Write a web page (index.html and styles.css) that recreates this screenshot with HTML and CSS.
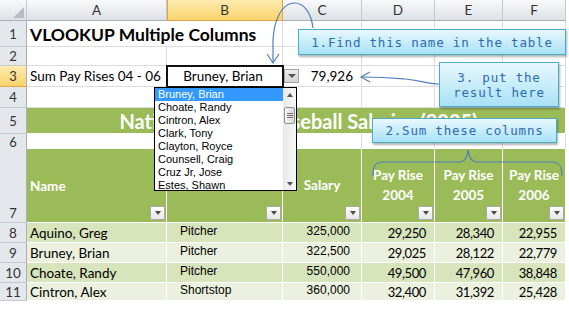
FILE: index.html
```html
<!DOCTYPE html>
<html lang="en">
    <head>
        <meta charset="UTF-8">
        <title>VLOOKUP Multiple Columns</title>
        <link rel="stylesheet" href="styles.css">
    </head>
    <body>
        <div class="page">
            <div class="sheet">
                <div class="row row-head">
                    <div class="cell corner"><span class="corner-mark"></span></div>
                    <div class="cell">A</div>
                    <div class="cell is-sel">B</div>
                    <div class="cell">C</div>
                    <div class="cell">D</div>
                    <div class="cell">E</div>
                    <div class="cell">F</div>
                    <div class="cell rest"></div>
                </div>

                <div class="row r1">
                    <div class="cell num">1</div>
                    <div class="cell title span2">VLOOKUP Multiple Columns</div>
                    <div class="cell"></div>
                    <div class="cell"></div>
                    <div class="cell"></div>
                    <div class="cell"></div>
                    <div class="cell rest"></div>
                </div>

                <div class="row r2">
                    <div class="cell num">2</div>
                    <div class="cell"></div>
                    <div class="cell"></div>
                    <div class="cell"></div>
                    <div class="cell"></div>
                    <div class="cell"></div>
                    <div class="cell"></div>
                    <div class="cell rest"></div>
                </div>

                <div class="row r3">
                    <div class="cell num is-sel">3</div>
                    <div class="cell">Sum Pay Rises 04 - 06</div>
                    <div class="cell active">Bruney, Brian<span class="drop-btn"></span></div>
                    <div class="cell right total">79,926</div>
                    <div class="cell"></div>
                    <div class="cell"></div>
                    <div class="cell"></div>
                    <div class="cell rest"></div>
                </div>

                <div class="row r4">
                    <div class="cell num">4</div>
                    <div class="cell"></div>
                    <div class="cell"></div>
                    <div class="cell"></div>
                    <div class="cell"></div>
                    <div class="cell"></div>
                    <div class="cell"></div>
                    <div class="cell rest"></div>
                </div>

                <div class="row r5">
                    <div class="cell num">5</div>
                    <div class="cell g banner">National League Baseball Salaries (2005)</div>
                    <div class="cell rest"></div>
                </div>

                <div class="row r6">
                    <div class="cell num">6</div>
                    <div class="cell"></div>
                    <div class="cell"></div>
                    <div class="cell"></div>
                    <div class="cell"></div>
                    <div class="cell"></div>
                    <div class="cell"></div>
                    <div class="cell rest"></div>
                </div>

                <div class="row r7">
                    <div class="cell num bottom">7</div>
                    <div class="cell g hd">Name<span class="filter"></span></div>
                    <div class="cell g hd"><span class="filter"></span></div>
                    <div class="cell g hd center">Salary<span class="filter"></span></div>
                    <div class="cell g hd center"><span>Pay Rise<br>2004</span><span class="filter"></span></div>
                    <div class="cell g hd center"><span>Pay Rise<br>2005</span><span class="filter"></span></div>
                    <div class="cell g hd center"><span>Pay Rise<br>2006</span><span class="filter"></span></div>
                    <div class="cell rest"></div>
                </div>

                <div class="row rd">
                    <div class="cell num">8</div>
                    <div class="cell lt">Aquino, Greg</div>
                    <div class="cell lt pos">Pitcher</div>
                    <div class="cell lt sal">325,000</div>
                    <div class="cell lt rise">29,250</div>
                    <div class="cell lt rise">28,340</div>
                    <div class="cell lt rise">22,955</div>
                    <div class="cell rest"></div>
                </div>

                <div class="row rd">
                    <div class="cell num">9</div>
                    <div class="cell lt2">Bruney, Brian</div>
                    <div class="cell lt2 pos">Pitcher</div>
                    <div class="cell lt2 sal">322,500</div>
                    <div class="cell lt2 rise">29,025</div>
                    <div class="cell lt2 rise">28,122</div>
                    <div class="cell lt2 rise">22,779</div>
                    <div class="cell rest"></div>
                </div>

                <div class="row rd">
                    <div class="cell num">10</div>
                    <div class="cell lt">Choate, Randy</div>
                    <div class="cell lt pos">Pitcher</div>
                    <div class="cell lt sal">550,000</div>
                    <div class="cell lt rise">49,500</div>
                    <div class="cell lt rise">47,960</div>
                    <div class="cell lt rise">38,848</div>
                    <div class="cell rest"></div>
                </div>

                <div class="row rd last">
                    <div class="cell num">11</div>
                    <div class="cell lt2">Cintron, Alex</div>
                    <div class="cell lt2 pos">Shortstop</div>
                    <div class="cell lt2 sal">360,000</div>
                    <div class="cell lt2 rise">32,400</div>
                    <div class="cell lt2 rise">31,392</div>
                    <div class="cell lt2 rise">25,428</div>
                    <div class="cell rest"></div>
                </div>
            </div>

            <!-- data validation list opened on B3 -->
            <div class="list">
                <div class="list-items">
                    <div class="on">Bruney, Brian</div>
                    <div>Choate, Randy</div>
                    <div>Cintron, Alex</div>
                    <div>Clark, Tony</div>
                    <div>Clayton, Royce</div>
                    <div>Counsell, Craig</div>
                    <div>Cruz Jr, Jose</div>
                    <div>Estes, Shawn</div>
                </div>
                <div class="scroll">
                    <span class="sb-btn up"></span>
                    <span class="sb-track"><span class="thumb"><span class="grip"></span></span></span>
                    <span class="sb-btn down"></span>
                </div>
            </div>

            <div class="note note-1">1.Find this name in the table</div>
            <div class="note note-2">2.Sum these columns</div>
            <div class="note note-3">3. put the<br>result here</div>

            <svg class="marks" width="569" height="313" viewBox="0 0 569 313">
                <path d="M313 28 C311 11 303 3 294 3 C282 3 274 20 273 40 L273 62"/>
                <path d="M267 54 L273 63 L279 54"/>
                <path d="M439 84 C426 84 420 80 405 79 C394 78 384 77 362 77"/>
                <path d="M370 72 L361 77 L370 82"/>
                <path d="M373 176 C373 166 375 162 383 162 L459 162 C465 162 467 158 468 150 C469 158 472 162 478 162 L552 162 C559 162 562 166 562 176"/>
            </svg>
        </div>
    </body>
</html>
```

FILE: styles.css
```css
* {
    box-sizing: border-box;
}

body {
    margin: 0;
    background: #fff;
}

.page {
    position: relative;
    width: 569px;
    height: 313px;
    overflow: hidden;
    font-family: Lato, "Liberation Sans", sans-serif;
    color: #000;
}

.row {
    display: grid;
    grid-template-columns: 27px 140px 116px 79px 73px 68px 63px 1fr;
}

.cell {
    display: flex;
    align-items: center;
    min-width: 0;
    padding: 0 3px;
    border-right: 1px solid #dadcdd;
    border-bottom: 1px solid #dadcdd;
    font-size: 13.5px;
    white-space: nowrap;
}

.rest {
    border: 0;
}

.span2 {
    grid-column: span 2;
}

.right {
    justify-content: flex-end;
}

/* row heights */
.row-head { height: 21px; }
.r1 { height: 26px; }
.r2 { height: 19px; }
.r3 { height: 21px; }
.r4 { height: 21px; }
.r5 { height: 26px; }
.r6 { height: 15px; }
.r7 { height: 74px; }
.rd { height: 20px; }
.rd.last { height: 17px; }

/* column letters */
.row-head .cell {
    justify-content: center;
    background: linear-gradient(#f8f9fa, #dde1e6);
    border-right: 1px solid #c5c9ce;
    border-bottom: 1px solid #a9afb6;
    color: #333;
}

.row-head .rest {
    background: #fff;
    border: 0;
}

.row-head .is-sel {
    background: linear-gradient(#fdebb0, #fbd36c);
    border-right-color: #e0a548;
    border-bottom-color: #e0a548;
    box-shadow: inset 1px 0 #e0a548;
}

.corner {
    justify-content: flex-end !important;
    align-items: flex-end;
    padding: 2px;
}

.corner-mark {
    width: 0;
    height: 0;
    border-left: 11px solid transparent;
    border-bottom: 11px solid #b8bdc3;
}

/* row numbers */
.num {
    justify-content: center;
    padding: 0;
    background: #e4e7eb;
    border-right: 1px solid #a9afb6;
    border-bottom: 1px solid #c5c9ce;
    color: #333;
    font-size: 13px;
}

.num.bottom {
    align-items: flex-end;
    padding-bottom: 1px;
}

.num.is-sel {
    background: linear-gradient(#fdebb0, #fbd36c);
    border-bottom-color: #e0a548;
}

.title {
    font-size: 17.5px;
    font-weight: 700;
    padding-top: 2px;
}

.active {
    position: relative;
    justify-content: center;
    outline: 2px solid #111;
    outline-offset: -1px;
    padding-right: 6px;
}

.drop-btn {
    position: absolute;
    left: calc(100% + 2px);
    top: 3px;
    width: 15px;
    height: 14px;
    display: flex;
    align-items: center;
    justify-content: center;
    border: 1px solid #a5a5a5;
    background: linear-gradient(#eeeeee, #d4d4d4);
}

.drop-btn::after {
    content: "";
    border-left: 4px solid transparent;
    border-right: 4px solid transparent;
    border-top: 4px solid #555;
}

.total {
    padding-right: 8px;
}

/* table */
.g {
    background: #9bbb59;
    border-color: #fff;
}

.banner {
    grid-column: span 6;
    justify-content: center;
    color: #fff;
    font-size: 20px;
    font-weight: 700;
    padding-left: 8px;
}

.hd {
    position: relative;
    color: #fff;
    font-weight: 700;
    font-size: 13.5px;
}

.hd.center {
    justify-content: center;
    text-align: center;
    line-height: 20px;
    padding-bottom: 1px;
}

.filter {
    position: absolute;
    right: 1px;
    bottom: 2px;
    width: 15px;
    height: 14px;
    display: flex;
    align-items: center;
    justify-content: center;
    border: 1px solid #a9a9a9;
    background: linear-gradient(#ffffff, #e6e6e6);
}

.filter::after {
    content: "";
    border-left: 3.5px solid transparent;
    border-right: 3.5px solid transparent;
    border-top: 4px solid #4a4a4a;
}

.lt {
    background: #d8e4bc;
    border-color: #fff;
}

.lt2 {
    background: #ebf1de;
    border-color: #fff;
}

.rd .cell {
    font-size: 13.5px;
    padding-top: 1px;
}

.rd .pos {
    padding-left: 13px;
    padding-top: 0;
    padding-bottom: 3px;
    font-family: "Liberation Sans", Arial, sans-serif;
    font-size: 12px;
}

.rd .sal {
    justify-content: flex-end;
    padding-right: 11px;
    padding-top: 0;
    padding-bottom: 3px;
    font-family: "Liberation Sans", Arial, sans-serif;
    font-size: 12px;
}

.rd .rise {
    justify-content: flex-end;
    padding-right: 8px;
    font-size: 13px;
    letter-spacing: -0.4px;
}

/* open dropdown */
.list {
    position: absolute;
    left: 154px;
    top: 87px;
    width: 143px;
    height: 104px;
    display: flex;
    border: 1px solid #000;
    background: #fff;
}

.list-items {
    flex: 1;
    overflow: hidden;
    font-family: "Liberation Sans", Arial, sans-serif;
    font-size: 11px;
}

.list-items div {
    height: 13px;
    line-height: 13px;
    padding-left: 3px;
    white-space: nowrap;
}

.list-items .on {
    background: #3399ff;
    color: #fff;
}

.scroll {
    width: 13px;
    display: flex;
    flex-direction: column;
    align-items: center;
    background: linear-gradient(90deg, #e9e9e9, #f7f7f7);
}

.sb-btn {
    height: 13px;
    display: flex;
    align-items: center;
    justify-content: center;
}

.sb-btn::after {
    content: "";
    border-left: 3.5px solid transparent;
    border-right: 3.5px solid transparent;
}

.sb-btn.up::after {
    border-bottom: 4px solid #555;
}

.sb-btn.down::after {
    border-top: 4px solid #555;
}

.sb-track {
    flex: 1;
    padding-top: 6px;
}

.thumb {
    width: 11px;
    height: 17px;
    display: flex;
    align-items: center;
    justify-content: center;
    border: 1px solid #8f8f8f;
    border-radius: 2px;
    background: linear-gradient(90deg, #f6f6f6, #d9d9d9);
}

.grip {
    width: 6px;
    height: 5px;
    background: repeating-linear-gradient(#6f6f6f 0 1px, transparent 1px 2px);
}

/* callouts */
.note {
    position: absolute;
    display: flex;
    align-items: center;
    justify-content: center;
    text-align: center;
    border: 1px solid #4bacc6;
    background: linear-gradient(#e9f8fd, #a8e1f5);
    box-shadow: 1px 2px 2px rgba(0, 0, 0, 0.3);
    color: #2c6cb0;
    font-family: "DejaVu Sans Mono", "Liberation Mono", monospace;
    font-size: 12.5px;
    letter-spacing: 0.8px;
    white-space: nowrap;
}

.note-1 {
    left: 298px;
    top: 29px;
    width: 268px;
    height: 26px;
}

.note-2 {
    left: 372px;
    top: 118px;
    width: 185px;
    height: 25px;
}

.note-3 {
    left: 439px;
    top: 62px;
    width: 120px;
    height: 45px;
    line-height: 15px;
}

.marks {
    position: absolute;
    left: 0;
    top: 0;
    fill: none;
    stroke: #4f7fba;
    stroke-width: 1.2;
}
```
